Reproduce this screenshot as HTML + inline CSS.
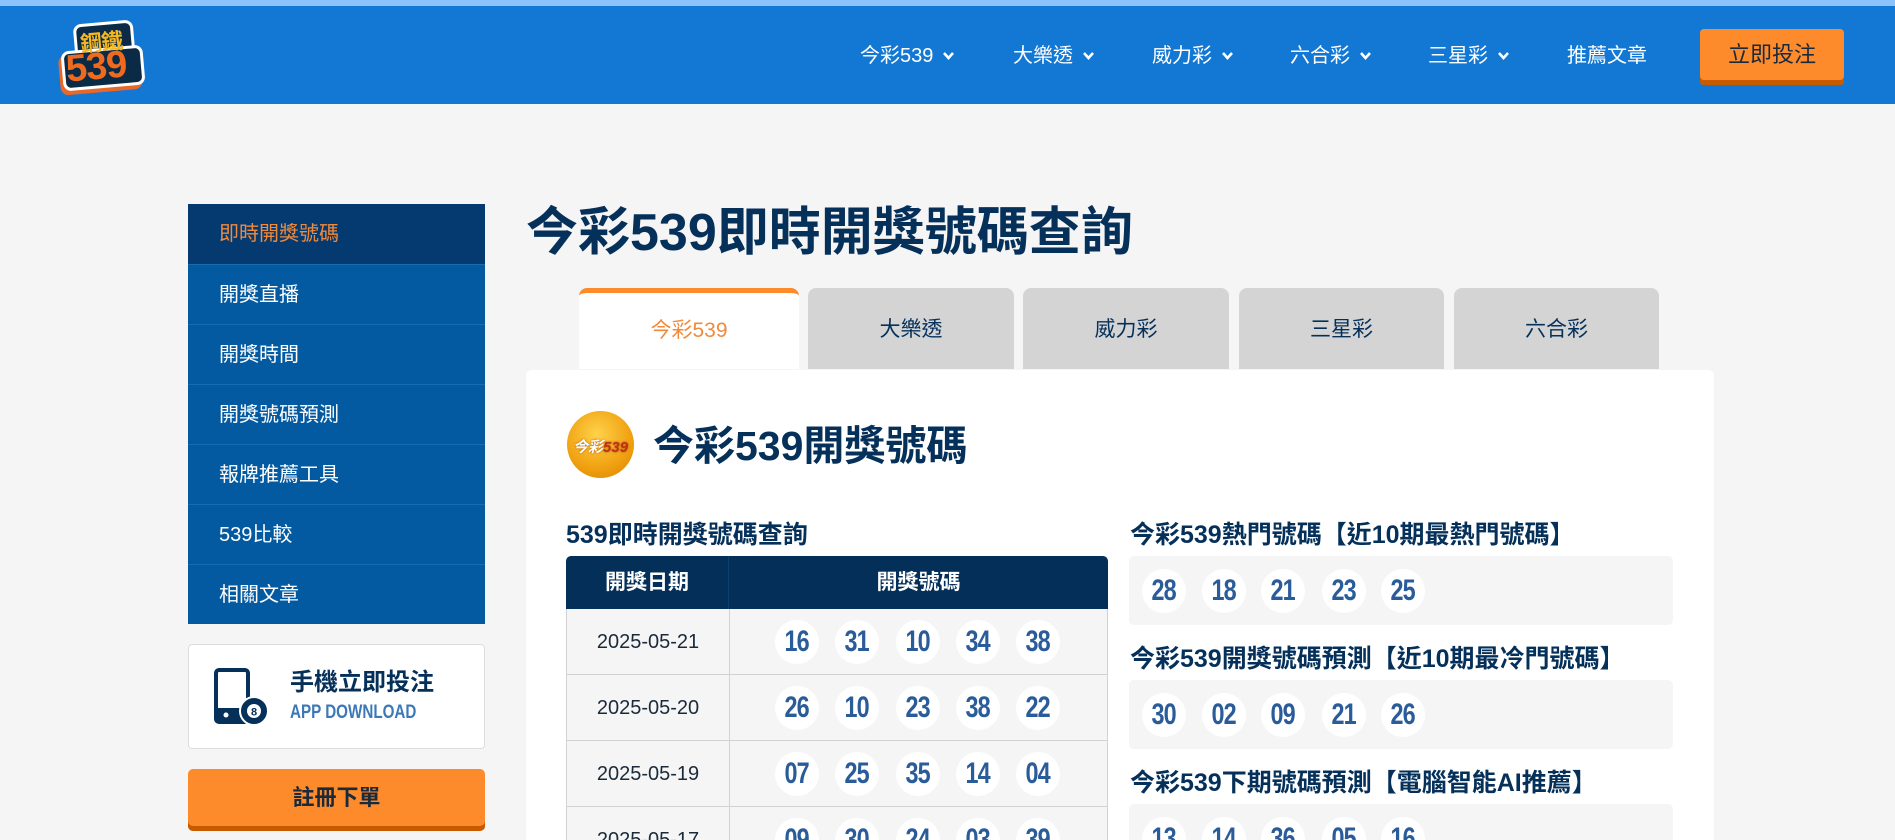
<!DOCTYPE html>
<html><head><meta charset="utf-8"><style>
*{margin:0;padding:0;box-sizing:border-box}
html{width:1895px;height:840px;overflow:hidden}
body{width:1895px;height:840px;overflow:hidden;background:#f5f5f5;font-family:"Liberation Sans","Noto Sans CJK TC",sans-serif;color:#05305a;position:relative}
.a{position:absolute}
.strip{left:0;top:0;width:1895px;height:6px;background:#8ac3fb}
.hdr{left:0;top:6px;width:1895px;height:98px;background:#1278d4}
.nav{top:44px;color:#fff;font-size:20px;line-height:24px;white-space:nowrap}
.nav svg{margin-left:10px;vertical-align:2px}
.btn{left:1700px;top:29px;width:144px;height:56px;background:#fd8a2b;border-radius:4px;box-shadow:inset 0 -5px 0 #c85a00;color:#1b2a3a;font-size:22px;text-align:center;line-height:52px}
.side{left:188px;width:297px;height:60px;background:#045aa0;color:#fff;font-size:20px;line-height:60px;padding-left:31px;border-top:1px solid #1a6cb0}
.ttl{left:526px;top:202px;font-size:52px;font-weight:bold;line-height:62px;color:#05305a;white-space:nowrap}
.tab{top:288px;height:81px;background:#d4d4d4;border-radius:8px 8px 0 0;text-align:center;line-height:84px;font-size:21px;color:#05305a}
.card{left:526px;top:370px;width:1188px;height:470px;background:#fff;border-radius:6px 6px 0 0}
.h3{font-size:25px;font-weight:bold;line-height:30px;color:#05305a;white-space:nowrap}
.ball{width:44px;height:44px;border-radius:50%;background:#fff;color:#2a5c9a;text-align:center;line-height:44px;font-family:"Liberation Sans Narrow","Liberation Sans",sans-serif;font-weight:bold;font-size:30px}
.ball span{display:inline-block;transform:scaleX(.78);letter-spacing:-1px}
.row{left:566px;width:542px;height:66px;background:#f5f5f5;border-bottom:1px solid #d2d2d2;border-left:1px solid #d2d2d2;border-right:1px solid #d2d2d2}
.date{position:absolute;left:0;width:163px;height:100%;border-right:1px solid #d2d2d2;text-align:center;font-size:20px;line-height:66px;color:#1b2a3a}
.box{left:1129px;width:544px;height:69px;background:#f5f5f5;border-radius:5px}
</style></head><body>
<div class="a strip"></div>
<div class="a hdr"></div>
<div class="a" style="left:60px;top:22px;width:82px;height:66px">
<div class="a" style="left:14px;top:0;width:60px;height:34px;background:#0b2a45;border:3px solid #fff;border-radius:8px;transform:rotate(-5deg)"></div>
<div class="a" style="left:2px;top:26px;width:82px;height:40px;background:#0b2a45;border:3px solid #fff;border-radius:8px;box-shadow:-3px 4px 0 #e8682a;transform:rotate(-5deg)"></div>
<div class="a" style="left:20px;top:3px;font-size:22px;font-weight:bold;color:#f5b820;transform:rotate(-5deg);letter-spacing:-1px">鋼鐵</div>
<div class="a" style="left:6px;top:24px;font-size:38px;font-weight:900;color:#f06a1e;transform:rotate(-5deg);font-family:'Liberation Sans',sans-serif;letter-spacing:-1px">539</div>
</div>
<div class="a nav" style="left:860px">今彩539<svg width="11" height="8" viewBox="0 0 11 8"><path d="M1 1l4.5 5L10 1" stroke="#fff" stroke-width="2.6" fill="none"/></svg></div>
<div class="a nav" style="left:1013px">大樂透<svg width="11" height="8" viewBox="0 0 11 8"><path d="M1 1l4.5 5L10 1" stroke="#fff" stroke-width="2.6" fill="none"/></svg></div>
<div class="a nav" style="left:1152px">威力彩<svg width="11" height="8" viewBox="0 0 11 8"><path d="M1 1l4.5 5L10 1" stroke="#fff" stroke-width="2.6" fill="none"/></svg></div>
<div class="a nav" style="left:1290px">六合彩<svg width="11" height="8" viewBox="0 0 11 8"><path d="M1 1l4.5 5L10 1" stroke="#fff" stroke-width="2.6" fill="none"/></svg></div>
<div class="a nav" style="left:1428px">三星彩<svg width="11" height="8" viewBox="0 0 11 8"><path d="M1 1l4.5 5L10 1" stroke="#fff" stroke-width="2.6" fill="none"/></svg></div>
<div class="a nav" style="left:1567px">推薦文章</div>
<div class="a btn">立即投注</div>

<div class="a side" style="top:204px;background:#043a70;color:#f08a3c;border-top:none">即時開獎號碼</div>
<div class="a side" style="top:264px">開獎直播</div>
<div class="a side" style="top:324px">開獎時間</div>
<div class="a side" style="top:384px">開獎號碼預測</div>
<div class="a side" style="top:444px">報牌推薦工具</div>
<div class="a side" style="top:504px">539比較</div>
<div class="a side" style="top:564px">相關文章</div>
<div class="a" style="left:188px;top:644px;width:297px;height:105px;background:#fff;border:1px solid #ddd;border-radius:4px"></div>
<svg class="a" style="left:214px;top:668px" width="56" height="58" viewBox="0 0 56 58"><rect x="2" y="2" width="32" height="52" rx="3" fill="none" stroke="#05305a" stroke-width="4"/><rect x="2" y="40" width="32" height="14" fill="#05305a"/><circle cx="12" cy="47" r="2.5" fill="#fff"/><circle cx="40" cy="43" r="14" fill="#05305a" stroke="#fff" stroke-width="2"/><circle cx="40" cy="43" r="7" fill="#fff"/><text x="40" y="47.5" font-size="11" font-weight="bold" text-anchor="middle" fill="#05305a" font-family="Liberation Sans">8</text></svg>
<div class="a" style="left:290px;top:668px;font-size:24px;font-weight:bold;color:#05305a;line-height:30px">手機立即投注</div>
<div class="a" style="left:290px;top:702px;font-size:19px;font-weight:bold;color:#3b78b8;font-family:'Liberation Sans Narrow','Liberation Sans',sans-serif;transform:scaleX(.8);transform-origin:left">APP DOWNLOAD</div>
<div class="a" style="left:188px;top:769px;width:297px;height:62px;background:#fd8a2b;border-radius:5px;box-shadow:inset 0 -5px 0 #c85a00;color:#1b2a3a;font-size:22px;font-weight:bold;text-align:center;line-height:58px">註冊下單</div>

<div class="a ttl">今彩539即時開獎號碼查詢</div>
<div class="a tab" style="left:579px;width:220px;background:#fff;color:#f08a3c;border-top:5px solid #fd8a2b;line-height:76px">今彩539</div>
<div class="a tab" style="left:808px;width:206px">大樂透</div>
<div class="a tab" style="left:1023px;width:206px">威力彩</div>
<div class="a tab" style="left:1239px;width:205px">三星彩</div>
<div class="a tab" style="left:1454px;width:205px">六合彩</div>
<div class="a card"></div>
<div class="a" style="left:567px;top:411px;width:67px;height:67px;border-radius:50%;background:radial-gradient(circle at 45% 35%,#ffd24a,#f0a010 60%,#d78000);"></div>
<div class="a" style="left:573px;top:436px;font-size:15px;font-weight:bold;color:#fff;font-style:italic;text-shadow:0 0 2px #b05000">今彩<span style="color:#c0301a">539</span></div>
<div class="a" style="left:653px;top:421px;font-size:41px;font-weight:bold;color:#05305a;line-height:50px;white-space:nowrap">今彩539開獎號碼</div>

<div class="a h3" style="left:566px;top:520px">539即時開獎號碼查詢</div>
<div class="a" style="left:566px;top:556px;width:542px;height:53px;background:#042f58;border-radius:5px 5px 0 0;color:#fff;font-size:21px;font-weight:bold;line-height:53px">
<span class="a" style="left:0;width:163px;text-align:center;border-right:1px solid #0d3f6e;height:53px">開獎日期</span>
<span class="a" style="left:163px;width:379px;text-align:center">開獎號碼</span></div>

<div class="a row" style="top:609px"><div class="date">2025-05-21</div></div>
<div class="a row" style="top:675px"><div class="date">2025-05-20</div></div>
<div class="a row" style="top:741px"><div class="date">2025-05-19</div></div>
<div class="a row" style="top:807px"><div class="date">2025-05-17</div></div>

<div class="a h3" style="left:1130px;top:520px">今彩539熱門號碼【近10期最熱門號碼】</div>
<div class="a box" style="top:556px"></div>
<div class="a h3" style="left:1130px;top:644px">今彩539開獎號碼預測【近10期最冷門號碼】</div>
<div class="a box" style="top:680px"></div>
<div class="a h3" style="left:1130px;top:768px">今彩539下期號碼預測【電腦智能AI推薦】</div>
<div class="a box" style="top:804px"></div>

<div class="a ball" style="left:775px;top:620px"><span>16</span></div><div class="a ball" style="left:835px;top:620px"><span>31</span></div><div class="a ball" style="left:896px;top:620px"><span>10</span></div><div class="a ball" style="left:956px;top:620px"><span>34</span></div><div class="a ball" style="left:1016px;top:620px"><span>38</span></div>
<div class="a ball" style="left:775px;top:686px"><span>26</span></div><div class="a ball" style="left:835px;top:686px"><span>10</span></div><div class="a ball" style="left:896px;top:686px"><span>23</span></div><div class="a ball" style="left:956px;top:686px"><span>38</span></div><div class="a ball" style="left:1016px;top:686px"><span>22</span></div>
<div class="a ball" style="left:775px;top:752px"><span>07</span></div><div class="a ball" style="left:835px;top:752px"><span>25</span></div><div class="a ball" style="left:896px;top:752px"><span>35</span></div><div class="a ball" style="left:956px;top:752px"><span>14</span></div><div class="a ball" style="left:1016px;top:752px"><span>04</span></div>
<div class="a ball" style="left:775px;top:818px"><span>09</span></div><div class="a ball" style="left:835px;top:818px"><span>30</span></div><div class="a ball" style="left:896px;top:818px"><span>24</span></div><div class="a ball" style="left:956px;top:818px"><span>03</span></div><div class="a ball" style="left:1016px;top:818px"><span>39</span></div>

<div class="a ball" style="left:1142px;top:569px"><span>28</span></div><div class="a ball" style="left:1202px;top:569px"><span>18</span></div><div class="a ball" style="left:1261px;top:569px"><span>21</span></div><div class="a ball" style="left:1322px;top:569px"><span>23</span></div><div class="a ball" style="left:1381px;top:569px"><span>25</span></div>
<div class="a ball" style="left:1142px;top:693px"><span>30</span></div><div class="a ball" style="left:1202px;top:693px"><span>02</span></div><div class="a ball" style="left:1261px;top:693px"><span>09</span></div><div class="a ball" style="left:1322px;top:693px"><span>21</span></div><div class="a ball" style="left:1381px;top:693px"><span>26</span></div>
<div class="a ball" style="left:1142px;top:817px"><span>13</span></div><div class="a ball" style="left:1202px;top:817px"><span>14</span></div><div class="a ball" style="left:1261px;top:817px"><span>36</span></div><div class="a ball" style="left:1322px;top:817px"><span>05</span></div><div class="a ball" style="left:1381px;top:817px"><span>16</span></div>
</body></html>
